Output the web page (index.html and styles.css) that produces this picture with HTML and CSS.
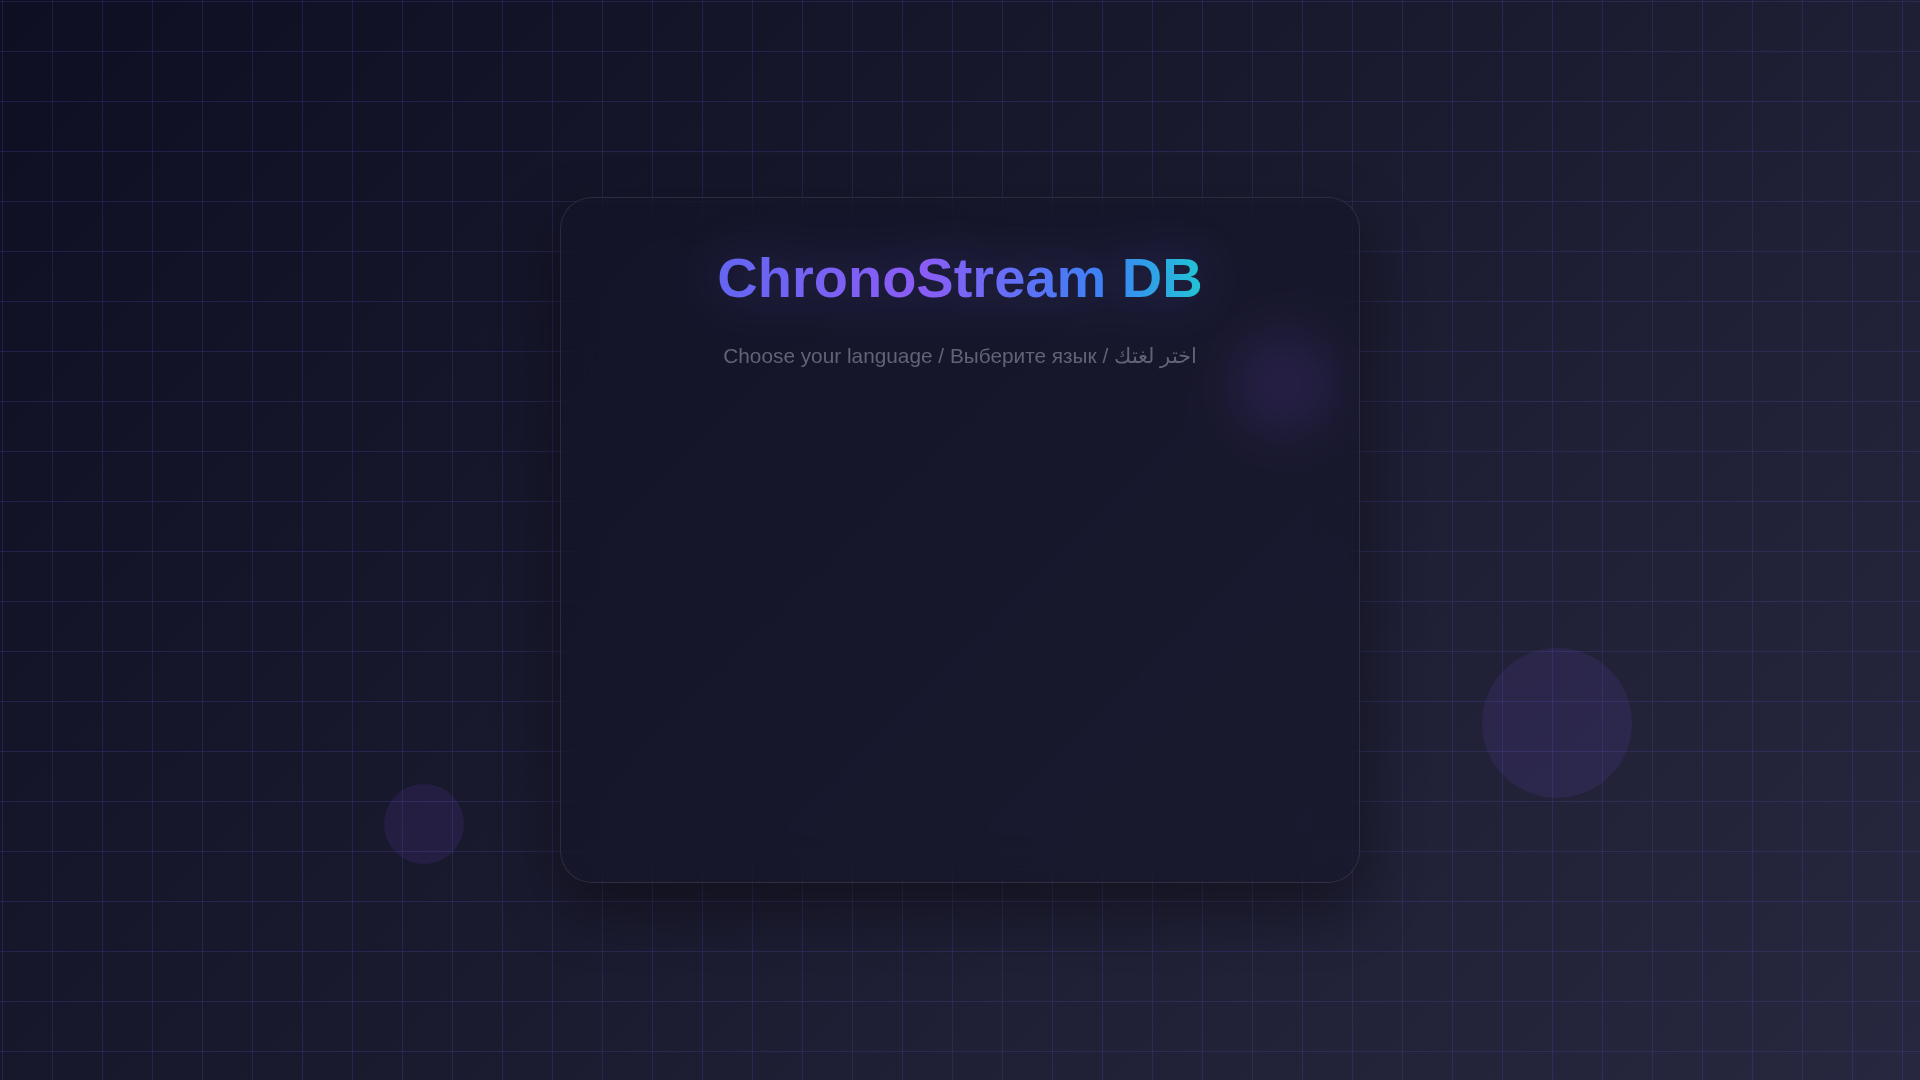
FILE: index.html
```html
<!DOCTYPE html>
<html lang="en">
<head>
<meta charset="utf-8">
<title>ChronoStream DB</title>
<link rel="stylesheet" href="styles.css">
</head>
<body>
<div class="grid-bg"></div>
<div class="orb orb-large"></div>
<div class="orb orb-small"></div>
<div class="orb orb-glow"></div>
<main class="card">
  <h1 class="title">ChronoStream DB</h1>
  <p class="subtitle">Choose your language / Выберите язык / <span dir="rtl">اختر لغتك</span></p>
  <div class="languages"></div>
</main>
</body>
</html>
```

FILE: styles.css
```css
* { box-sizing: border-box; }

html, body {
  margin: 0;
  height: 100%;
}

body {
  min-height: 100vh;
  overflow: hidden;
  display: flex;
  align-items: center;
  justify-content: center;
  font-family: "Liberation Sans", "Noto Sans", sans-serif;
  background: linear-gradient(135deg, #0f0f23 0%, #1b1b30 50%, #27273f 100%);
  position: relative;
}

.grid-bg {
  position: absolute;
  inset: 0;
  background-image:
    linear-gradient(90deg, rgba(99, 102, 241, 0.16) 1px, transparent 1px),
    linear-gradient(0deg, rgba(99, 102, 241, 0.16) 1px, transparent 1px);
  background-size: 50px 50px;
  background-position: 2px 2px;
}

.orb {
  position: absolute;
  border-radius: 50%;
  background: rgba(139, 92, 246, 0.1);
}

.orb-large {
  left: 1482px;
  top: 648px;
  width: 150px;
  height: 150px;
}

.orb-small {
  left: 384px;
  top: 784px;
  width: 80px;
  height: 80px;
}

.orb-glow {
  left: 1232px;
  top: 332px;
  width: 102px;
  height: 102px;
  background: rgba(139, 92, 246, 0.26);
}

.card {
  position: relative;
  z-index: 1;
  width: 800px;
  padding: 48px;
  border-radius: 32px;
  border: 1px solid rgba(255, 255, 255, 0.1);
  background: rgba(20, 20, 40, 0.55);
  backdrop-filter: blur(20px);
  -webkit-backdrop-filter: blur(20px);
  box-shadow: 0 25px 60px rgba(0, 0, 0, 0.4);
  text-align: center;
}

.title {
  margin: 0 0 34px;
  font-size: 56px;
  font-weight: 700;
  line-height: 64px;
  background: linear-gradient(90deg, #6366f1 0%, #8b5cf6 42%, #3b82f6 80%, #22c4d4 100%);
  -webkit-background-clip: text;
  background-clip: text;
  color: transparent;
  -webkit-text-fill-color: transparent;
  filter: drop-shadow(0 0 24px rgba(99, 102, 241, 0.3));
  display: inline-block;
}

.subtitle {
  margin: 0;
  font-size: 20.8px;
  line-height: 24px;
  color: #636376;
}

.languages {
  height: 466px;
}
```
